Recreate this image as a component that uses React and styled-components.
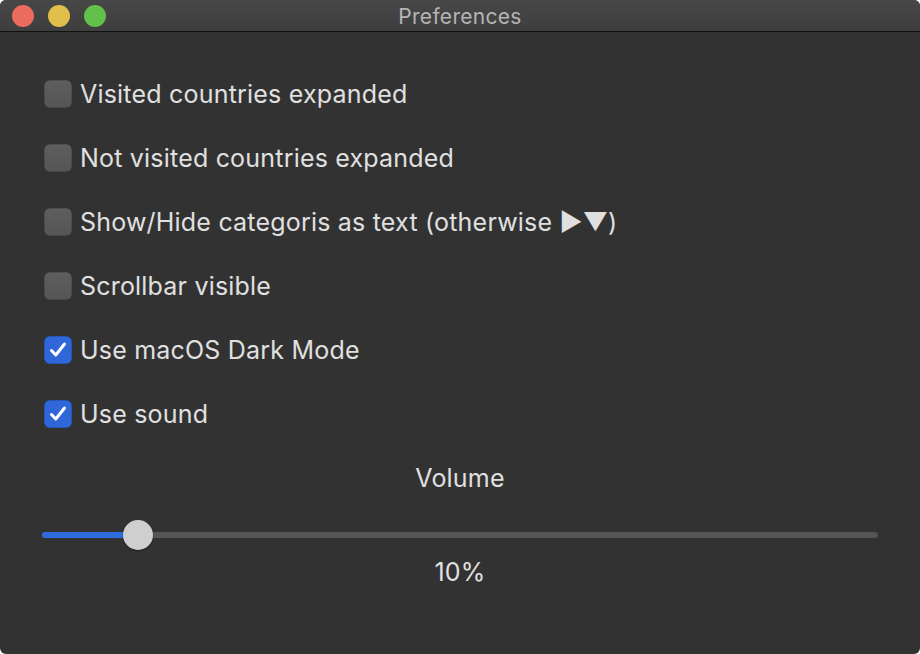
import styled, { createGlobalStyle } from 'styled-components';

const Global = createGlobalStyle`
  html, body {
    margin: 0;
    padding: 0;
    background: #ffffff;
  }
  body {
    font-family: Inter, "Noto Sans", "Liberation Sans", sans-serif;
  }
`;

const Window = styled.div`
  width: 920px;
  height: 654px;
  background: #323232;
  border-radius: 6px;
  overflow: hidden;
  display: flex;
  flex-direction: column;
`;

const TitleBar = styled.div`
  position: relative;
  height: 31px;
  background: linear-gradient(#474747, #3e3e3e);
  border-bottom: 1px solid #111111;
  display: flex;
  align-items: center;
  justify-content: center;
`;

const Lights = styled.div`
  position: absolute;
  left: 12px;
  top: 5px;
  display: flex;
  gap: 14px;
`;

const Light = styled.span`
  width: 22px;
  height: 22px;
  border-radius: 50%;
  background: ${(p) => p.color};
`;

const Title = styled.div`
  color: #b4b4b4;
  font-size: 21px;
  letter-spacing: 0.3px;
  margin-top: 2px;
`;

const Body = styled.div`
  padding: 30px 42px 0 44px;
  display: flex;
  flex-direction: column;
`;

const Row = styled.label`
  height: 64px;
  display: flex;
  align-items: center;
  gap: 8px;
  color: #e0e0e0;
  font-size: 25px;
  letter-spacing: 0.2px;
`;

const Box = styled.span`
  width: 28px;
  height: 28px;
  border-radius: 6px;
  box-sizing: border-box;
  background: ${(p) => (p.checked ? '#2f66d8' : 'linear-gradient(#5e5e5e, #555555)')};
  box-shadow: inset 0 0 0 0.5px rgba(0, 0, 0, 0.3);
  display: flex;
  align-items: center;
  justify-content: center;
  flex-shrink: 0;
`;

const Label = styled.div`
  height: 64px;
  display: flex;
  align-items: center;
  justify-content: center;
  color: #e0e0e0;
  font-size: 25px;
  letter-spacing: 0.2px;
  margin-left: -2px;
`;

const SliderWrap = styled.div`
  position: relative;
  height: 50px;
  margin-left: -2px;
  display: flex;
  align-items: center;
`;

const Track = styled.div`
  flex: 1;
  height: 6px;
  border-radius: 3px;
  background: #555555;
  position: relative;
`;

const Fill = styled.div`
  height: 100%;
  border-radius: 3px;
  background: #2f6ce0;
`;

const Knob = styled.div`
  position: absolute;
  top: 50%;
  width: 30px;
  height: 30px;
  margin: -15px 0 0 -15px;
  border-radius: 50%;
  background: #cfcfcf;
  box-shadow: 0 1px 2px rgba(0, 0, 0, 0.4);
`;

const Value = styled.div`
  height: 24px;
  line-height: 24px;
  text-align: center;
  color: #e0e0e0;
  font-size: 25px;
  letter-spacing: 0.2px;
  margin-left: -2px;
`;

const options = [
  { text: 'Visited countries expanded', checked: false },
  { text: 'Not visited countries expanded', checked: false },
  { text: 'Show/Hide categoris as text (otherwise \u25B6\u25BC)', checked: false },
  { text: 'Scrollbar visible', checked: false },
  { text: 'Use macOS Dark Mode', checked: true },
  { text: 'Use sound', checked: true },
];

function Check() {
  return (
    <svg width="28" height="28" viewBox="0 0 28 28">
      <path d="M7.5 14.5 L11.8 19 L20.5 8" fill="none" stroke="#ffffff" strokeWidth="3" strokeLinecap="round" strokeLinejoin="round" />
    </svg>
  );
}

export default function App() {
  const volume = 10;
  return (
    <>
      <Global />
      <Window>
        <TitleBar>
          <Lights>
            <Light color="#ec6a5e" />
            <Light color="#e1bf4c" />
            <Light color="#62c14a" />
          </Lights>
          <Title>Preferences</Title>
        </TitleBar>
        <Body>
          {options.map((o) => (
            <Row key={o.text}>
              <Box checked={o.checked}>{o.checked && <Check />}</Box>
              {o.text}
            </Row>
          ))}
          <Label>Volume</Label>
          <SliderWrap>
            <Track>
              <Fill style={{ width: `${(96 / 836) * 100}%` }} />
              <Knob style={{ left: `${(96 / 836) * 100}%` }} />
            </Track>
          </SliderWrap>
          <Value>{volume}%</Value>
        </Body>
      </Window>
    </>
  );
}
